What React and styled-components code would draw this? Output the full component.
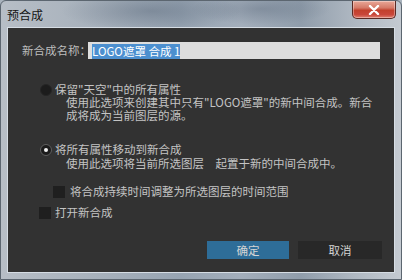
import React from "react";
import styled, { createGlobalStyle } from "styled-components";

const Global = createGlobalStyle`
  html, body { margin: 0; padding: 0; background: #a9b3bd; }
  body { font-family: "Noto Sans CJK SC", "Noto Sans", sans-serif; }
`;

const Window = styled.div`
  width: 402px;
  height: 280px;
  box-sizing: border-box;
  display: flex;
  flex-direction: column;
  background:
    radial-gradient(ellipse 90px 20px at 150px 10px, rgba(70,85,105,0.35), transparent),
    radial-gradient(ellipse 70px 16px at 260px 8px, rgba(70,85,105,0.3), transparent),
    linear-gradient(90deg, #b7bec6 0%, #a6b0bb 25%, #97a4b2 45%, #a3aebb 60%, #909dab 75%, #aeb7c1 88%, #c4cad1 100%);
  border: 1px solid #5c6670;
  border-radius: 6px 6px 0 0;
  overflow: hidden;
`;

const TitleBar = styled.div`
  height: 26px;
  flex: none;
  display: flex;
  align-items: flex-start;
  justify-content: space-between;
  padding-left: 6px;
`;

const Title = styled.div`
  font-size: 12px;
  line-height: 14px;
  margin-top: 7px;
  color: #141414;
`;

const CloseButton = styled.div`
  width: 42px;
  height: 17px;
  margin-right: 5px;
  border: 1px solid #5a2a24;
  border-top: none;
  border-radius: 0 0 5px 5px;
  background: linear-gradient(180deg, #e9a898 0%, #d57a68 40%, #c2402c 55%, #c9473a 80%, #df8070 100%);
  display: flex;
  align-items: center;
  justify-content: center;
  box-shadow: inset 0 0 0 1px rgba(255,255,255,0.35);
`;

const Content = styled.div`
  flex: 1;
  margin: 0 6px 6px 6px;
  background: #323232;
  border: 1px solid #d6dde4;
  display: flex;
  flex-direction: column;
  padding: 14px 0 0 14px;
  color: #c4c4c4;
  font-size: 11.5px;
`;

const NameRow = styled.div`
  display: flex;
  align-items: center;
  height: 17px;
`;

const Label = styled.div`
  width: 66px;
  line-height: 17px;
  color: #bdbdbd;
  white-space: nowrap;
`;

const Input = styled.div`
  width: 292px;
  height: 17px;
  box-sizing: border-box;
  background: #dedede;
  padding: 1px 0 0 4px;
  display: flex;
  align-items: center;
`;

const Selected = styled.span`
  background: #4c8fcf;
  color: #ffffff;
  line-height: 15px;
  font-size: 11.5px;
  white-space: nowrap;
`;

const Options = styled.div`
  display: flex;
  flex-direction: column;
  padding-left: 18px;
`;

const Row = styled.div`
  display: flex;
  align-items: center;
  gap: ${p => p.$gap || 3}px;
  height: 13px;
  margin-top: ${p => p.$top || 0}px;
  margin-left: ${p => p.$indent || 0}px;
  line-height: 13px;
  white-space: nowrap;
`;

const Radio = styled.div`
  width: 12px;
  height: 12px;
  box-sizing: border-box;
  border-radius: 50%;
  background: #1c1c1c;
  border: 1px solid ${p => (p.$on ? "#5e5e5e" : "#252525")};
  display: flex;
  align-items: center;
  justify-content: center;
  flex: none;
  &::after {
    content: "";
    display: ${p => (p.$on ? "block" : "none")};
    width: 4px;
    height: 4px;
    border-radius: 50%;
    background: #f0f0f0;
  }
`;

const Check = styled.div`
  width: 12px;
  height: 12px;
  background: #1f1f1f;
  flex: none;
`;

const Desc = styled.div`
  padding-left: 26px;
  line-height: 13px;
  white-space: pre;
  margin-top: ${p => p.$top || 0}px;
`;

const Buttons = styled.div`
  display: flex;
  gap: 9px;
  margin-top: 22px;
  margin-left: 185px;
`;

const Button = styled.div`
  width: ${p => p.$w}px;
  height: 18px;
  display: flex;
  align-items: center;
  justify-content: center;
  background: ${p => (p.$primary ? "#2e6d98" : "#282828")};
  color: #d4d4d4;
  font-size: 11.5px;
`;

export default function App() {
  return (
    <>
      <Global />
      <Window>
        <TitleBar>
          <Title>预合成</Title>
          <CloseButton>
            <svg width="12" height="10" viewBox="0 0 12 10">
              <path d="M2 1 L10 9 M10 1 L2 9" stroke="#ffffff" strokeWidth="2.4" strokeLinecap="round" />
            </svg>
          </CloseButton>
        </TitleBar>
        <Content>
          <NameRow>
            <Label>新合成名称：</Label>
            <Input>
              <Selected>LOGO遮罩 合成 1</Selected>
            </Input>
          </NameRow>
          <Options>
            <Row $top={24}>
              <Radio />
              <span>保留"天空"中的所有属性</span>
            </Row>
            <Desc>
              使用此选项来创建其中只有"LOGO遮罩"的新中间合成。新合
              <br />
              成将成为当前图层的源。
            </Desc>
            <Row $top={21}>
              <Radio $on />
              <span>将所有属性移动到新合成</span>
            </Row>
            <Desc $top={1}>使用此选项将当前所选图层　起置于新的中间合成中。</Desc>
            <Row $top={15} $indent={13} $gap={5}>
              <Check />
              <span>将合成持续时间调整为所选图层的时间范围</span>
            </Row>
            <Row $top={8} $indent={-1} $gap={4}>
              <Check />
              <span>打开新合成</span>
            </Row>
          </Options>
          <Buttons>
            <Button $primary $w={82}>确定</Button>
            <Button $w={84}>取消</Button>
          </Buttons>
        </Content>
      </Window>
    </>
  );
}
